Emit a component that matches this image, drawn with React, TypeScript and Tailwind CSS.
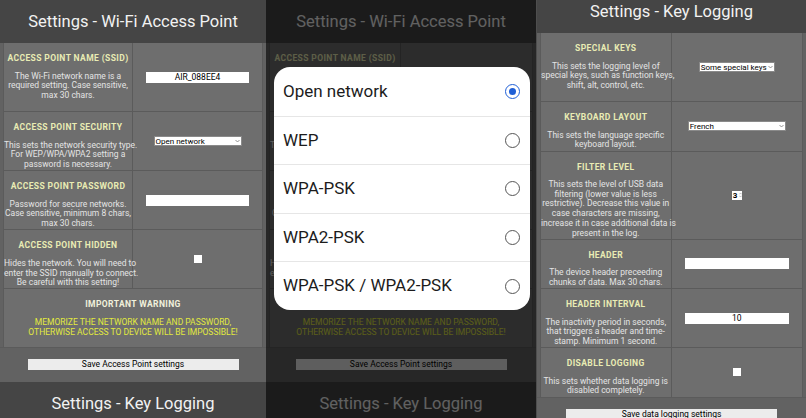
import React from 'react';

type Row = {
  title: string;
  lines: string[];
  control: React.ReactNode;
};

function Chevron() {
  return (
    <svg width="5" height="4" viewBox="0 0 5 4" className="shrink-0">
      <path d="M0.5 1 L2.5 3 L4.5 1" fill="none" stroke="#777" strokeWidth="0.8" />
    </svg>
  );
}

function TextBox({ value = '', width = 'w-[80%]' }: { value?: string; width?: string }) {
  return (
    <div className={`${width} h-[11px] bg-white text-black text-[8.5px] leading-[11px] text-center`}>
      {value}
    </div>
  );
}

function Select({ value, width }: { value: string; width: string }) {
  return (
    <div className={`${width} h-[10px] bg-white border border-[#8a8a8a] flex items-center px-[1px] gap-[1px] text-black text-[8px] leading-[9px]`}>
      <span className="flex-1 whitespace-nowrap">{value}</span>
      <Chevron />
    </div>
  );
}

function NumberBox({ value }: { value: string }) {
  return (
    <div className="w-[10px] h-[9px] bg-white flex items-center pl-[1px] text-black text-[8px] font-bold leading-[9px]">
      <span>{value}</span>
      <svg width="3" height="6" viewBox="0 0 3 6" className="ml-auto">
        <path d="M0.3 2.3 L1.5 1 L2.7 2.3 M0.3 3.7 L1.5 5 L2.7 3.7" fill="none" stroke="#999" strokeWidth="0.6" />
      </svg>
    </div>
  );
}

function CheckBox() {
  return <div className="w-[8px] h-[8px] bg-white" />;
}

function Header({ title }: { title: string }) {
  return (
    <div className="h-[43px] shrink-0 bg-[#454545] flex items-center justify-center pt-[2px] text-[16.5px] text-[#f2f2f2] whitespace-nowrap">
      {title}
    </div>
  );
}

function SettingRow({ row, first }: { row: Row; first?: boolean }) {
  return (
    <div className={`grid grid-cols-2 ${first ? '' : 'border-t border-[#5b5b5b]'}`}>
      <div className={`border-r border-[#5b5b5b] text-center pt-[9px] ${first ? 'pb-[10.5px]' : 'pb-[0.5px]'}`}>
        <div className="text-[8.5px] leading-[12px] font-bold tracking-[0.4px] text-[#e9ecb4] whitespace-nowrap">{row.title}</div>
        <div className="mt-[7.5px] text-[8.5px] leading-[9.7px] text-[#e4e4e4]">
          {row.lines.map((l, i) => (
            <div key={i} className="whitespace-nowrap">{l}</div>
          ))}
        </div>
      </div>
      <div className="flex items-center justify-center">{row.control}</div>
    </div>
  );
}

function SaveButton({ label }: { label: string }) {
  return (
    <div className="w-[211px] h-[11px] bg-[#ececec] text-black text-[8.5px] leading-[11px] text-center whitespace-nowrap">
      {label}
    </div>
  );
}

const wifiRows: Row[] = [
  {
    title: 'ACCESS POINT NAME (SSID)',
    lines: ['The Wi-Fi network name is a', 'required setting. Case sensitive,', 'max 30 chars.'],
    control: <TextBox value="AIR_088EE4" />
  },
  {
    title: 'ACCESS POINT SECURITY',
    lines: ['This sets the network security type.', 'For WEP/WPA/WPA2 setting a', 'password is necessary.'],
    control: <Select value="Open network" width="w-[88px]" />
  },
  {
    title: 'ACCESS POINT PASSWORD',
    lines: ['Password for secure networks.', 'Case sensitive, minimum 8 chars,', 'max 30 chars.'],
    control: <TextBox />
  },
  {
    title: 'ACCESS POINT HIDDEN',
    lines: ['Hides the network. You will need to', 'enter the SSID manually to connect.', 'Be careful with this setting!'],
    control: <CheckBox />
  }
];

const loggingRows: Row[] = [
  {
    title: 'SPECIAL KEYS',
    lines: ['This sets the logging level of', 'special keys, such as function keys,', 'shift, alt, control, etc.'],
    control: <Select value="Some special keys" width="w-auto" />
  },
  {
    title: 'KEYBOARD LAYOUT',
    lines: ['This sets the language specific', 'keyboard layout.'],
    control: <Select value="French" width="w-[98px]" />
  },
  {
    title: 'FILTER LEVEL',
    lines: [
      'This sets the level of USB data',
      'filtering (lower value is less',
      'restrictive). Decrease this value in',
      'case characters are missing,',
      'increase it in case additional data is',
      'present in the log.'
    ],
    control: <NumberBox value="3" />
  },
  {
    title: 'HEADER',
    lines: ['The device header preceeding', 'chunks of data. Max 30 chars.'],
    control: <TextBox />
  },
  {
    title: 'HEADER INTERVAL',
    lines: ['The inactivity period in seconds,', 'that triggers a header and time-', 'stamp. Minimum 1 second.'],
    control: <TextBox value="10" />
  },
  {
    title: 'DISABLE LOGGING',
    lines: ['This sets whether data logging is', 'disabled completely.'],
    control: <CheckBox />
  }
];

function WifiPage() {
  return (
    <div className="flex flex-col">
      <Header title="Settings - Wi-Fi Access Point" />
      <div className="mx-[3px] bg-[#6e6e6e] border-x border-[#5b5b5b]">
        {wifiRows.map((r, i) => (
          <SettingRow key={i} row={r} first={i === 0} />
        ))}
        <div className="border-t border-[#5b5b5b] text-center pt-[9px] pb-[9px]">
          <div className="text-[8.5px] leading-[12px] font-bold tracking-[0.4px] text-[#f1f1dc]">IMPORTANT WARNING</div>
          <div className="mt-[8px] text-[8.5px] leading-[9.7px] text-[#e2ea3e] whitespace-nowrap">
            <div>MEMORIZE THE NETWORK NAME AND PASSWORD,</div>
            <div>OTHERWISE ACCESS TO DEVICE WILL BE IMPOSSIBLE!</div>
          </div>
        </div>
      </div>
      <div className="h-[35px] border-t border-[#5b5b5b] flex items-center justify-center">
        <SaveButton label="Save Access Point settings" />
      </div>
      <Header title="Settings - Key Logging" />
    </div>
  );
}

const securityOptions = ['Open network', 'WEP', 'WPA-PSK', 'WPA2-PSK', 'WPA-PSK / WPA2-PSK'];

function SecurityPicker() {
  return (
    <div className="absolute left-[8px] right-[6px] top-[67px] bg-white rounded-[16px] overflow-hidden">
      {securityOptions.map((opt, i) => (
        <div
          key={opt}
          className={`h-[48.6px] flex items-center justify-between pl-[9px] pr-[10px] ${i > 0 ? 'border-t border-[#e6e6e6]' : ''}`}
        >
          <span className="text-[17px] text-[#1c1c1c] whitespace-nowrap">{opt}</span>
          {i === 0 ? (
            <span className="w-[15px] h-[15px] rounded-full border-[1.5px] border-[#1f5fd6] flex items-center justify-center">
              <span className="w-[7px] h-[7px] rounded-full bg-[#1f5fd6]" />
            </span>
          ) : (
            <span className="w-[15px] h-[15px] rounded-full border-[1.3px] border-[#555]" />
          )}
        </div>
      ))}
    </div>
  );
}

export default function App() {
  return (
    <div className="w-[806px] h-[418px] flex overflow-hidden bg-[#666] font-['Roboto',sans-serif]">
      <div className="w-[266px] h-[418px] shrink-0 overflow-hidden bg-[#626262]">
        <WifiPage />
      </div>

      <div className="relative w-[270px] h-[418px] shrink-0 overflow-hidden bg-[#626262]">
        <WifiPage />
        <div className="absolute inset-0 bg-black/60" />
        <SecurityPicker />
      </div>

      <div className="w-[270px] h-[418px] shrink-0 overflow-hidden bg-[#626262] border-l border-[#4e4e4e]">
        <div className="-mt-[10px] flex flex-col">
          <Header title="Settings - Key Logging" />
          <div className="mx-[3px] bg-[#6e6e6e] border-x border-[#5b5b5b]">
            {loggingRows.map((r, i) => (
              <SettingRow key={i} row={r} first={i === 0} />
            ))}
          </div>
          <div className="h-[35px] border-t border-[#5b5b5b] flex items-center justify-center">
            <SaveButton label="Save data logging settings" />
          </div>
        </div>
      </div>
    </div>
  );
}
